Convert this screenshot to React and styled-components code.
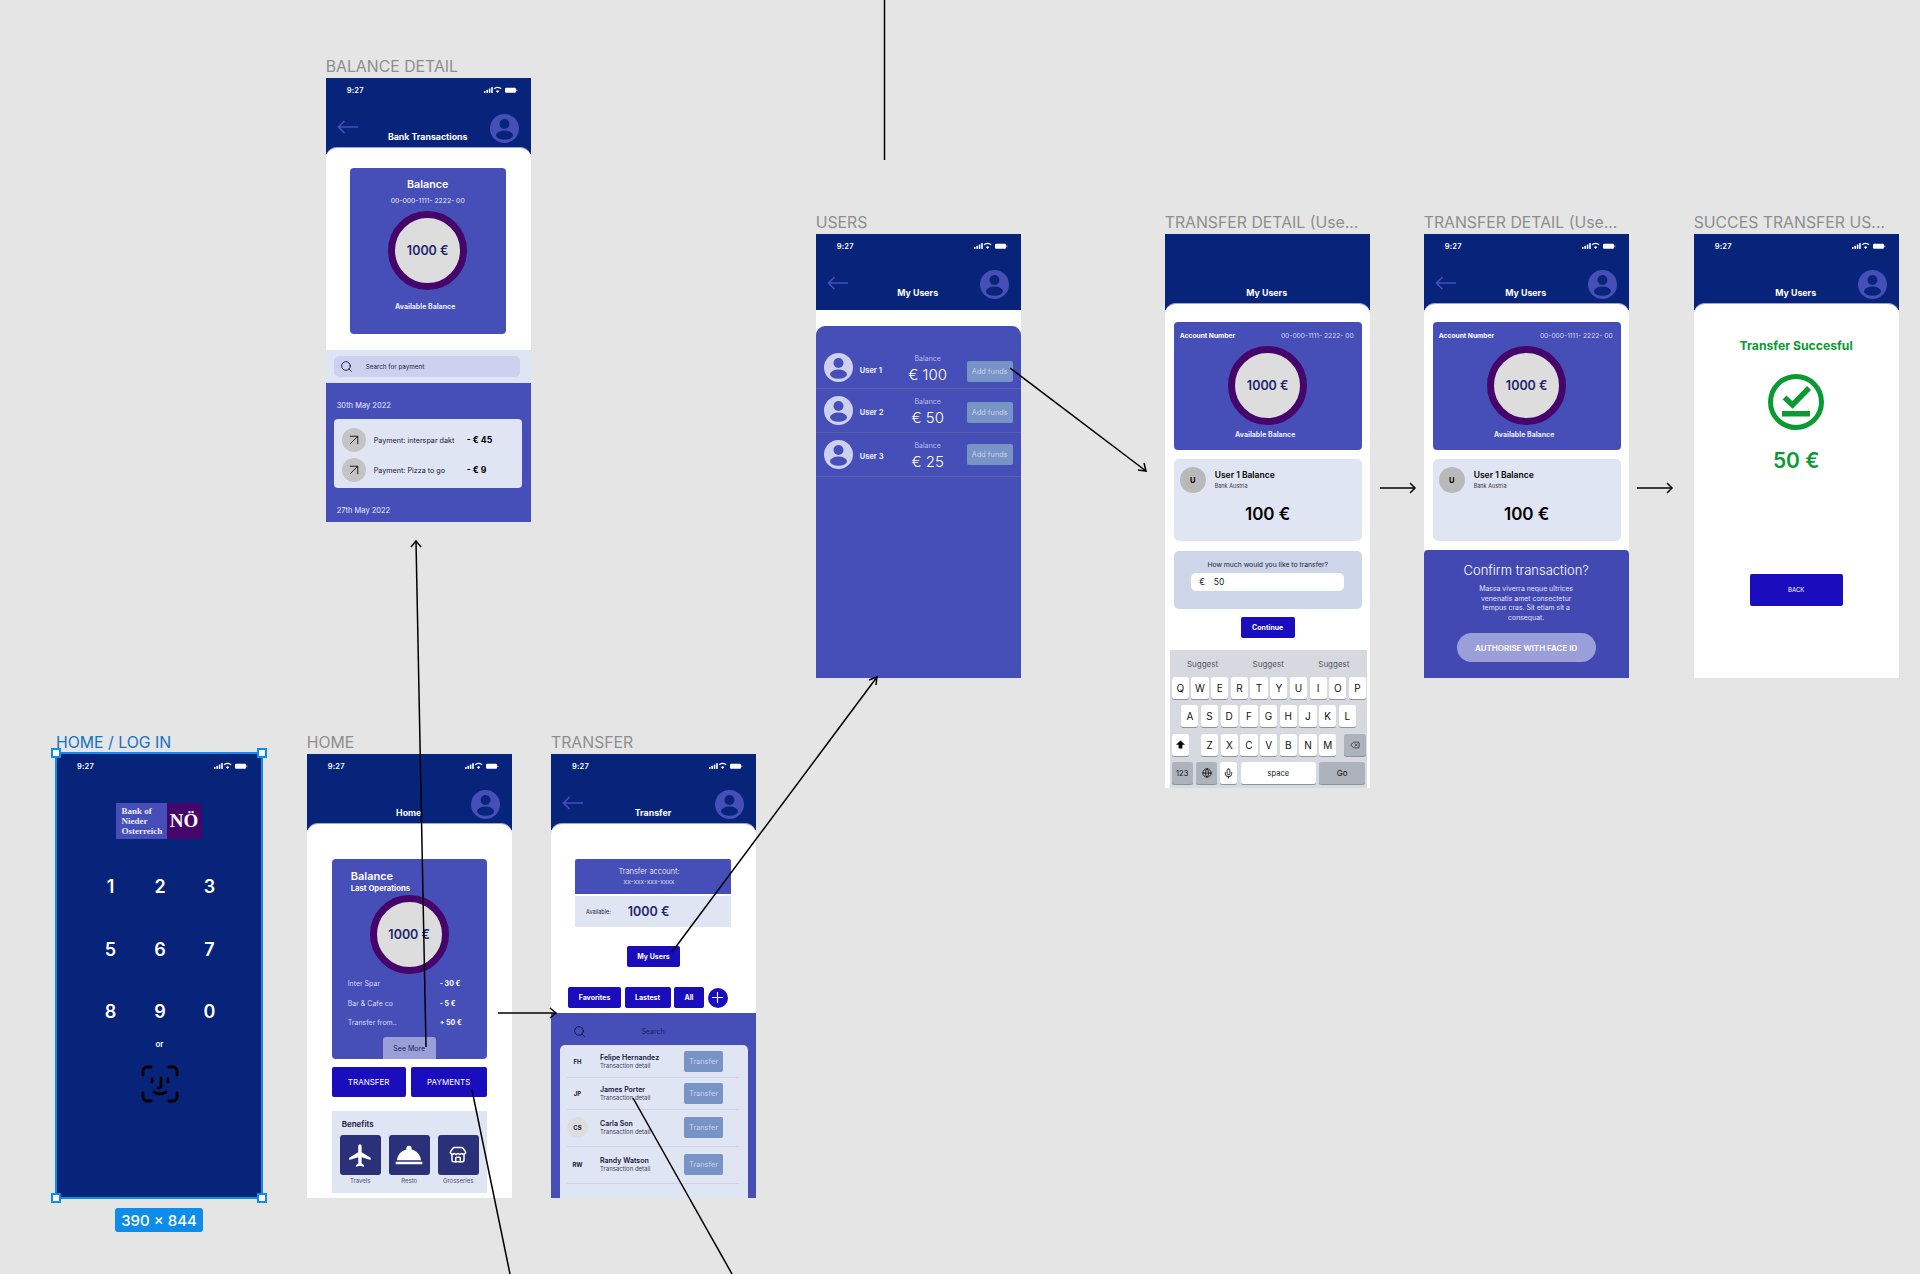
import React from 'react';
import styled, {createGlobalStyle} from 'styled-components';
import {ArrowUpRight, Delete, Globe, Mic, Plus, Search, Store} from 'lucide-react';
import {MdFlight, MdRoomService} from 'react-icons/md';

const NAVY = '#07247a';
const PURPLE = '#464eb8';
const RING = '#46056a';
const PALE = '#e0e5f3';
const BLUE = '#1a0dbe';
const MUTED = '#7893c6';
const SOFT = '#9a9fda';

const GlobalStyle = createGlobalStyle`
  html, body {
    margin: 0;
    padding: 0;
    background: #e5e5e5;
  }
  * {
    box-sizing: border-box;
  }
`;

const Canvas = styled.div`
  position: relative;
  width: 1920px;
  height: 1274px;
  overflow: hidden;
  background: #e5e5e5;
  font-family: Inter, 'Liberation Sans', sans-serif;
`;

// frames sit on a free canvas, so their place is the content
const Frame = styled.div`
  position: absolute;
  left: ${p => p.$x}px;
  top: ${p => p.$y}px;
  width: 205px;
  height: ${p => p.$h || 444}px;
  display: flex;
  flex-direction: column;
  overflow: hidden;
  background: ${p => p.$bg || '#fff'};
`;

const FrameLabel = styled.div`
  position: absolute;
  left: ${p => p.$x}px;
  top: ${p => p.$y - 21}px;
  width: 205px;
  height: 20px;
  font-size: 15.8px;
  line-height: 20px;
  font-weight: 400;
  white-space: nowrap;
  color: ${p => p.$blue ? '#1273c4' : '#8e8e8e'};
`;

const HeaderBar = styled.div`
  flex: none;
  height: 76px;
  background: ${NAVY};
  color: #fff;
`;

const StatusRow = styled.div`
  flex: none;
  height: 24px;
  padding: 0 12px 0 21px;
  display: flex;
  align-items: center;
  justify-content: space-between;
  font-size: 7.5px;
  font-weight: 600;
  letter-spacing: 0.2px;
  color: #fff;
`;

const NavRow = styled.div`
  display: grid;
  grid-template-columns: 1fr auto 1fr;
  padding: 0 12px 0 11px;
`;

const NavTitle = styled.div`
  margin-top: 30px;
  font-size: 8.8px;
  line-height: 10px;
  font-weight: 700;
  white-space: nowrap;
`;

const BackSlot = styled.div`
  margin-top: 18px;
  height: 14px;
  display: flex;
`;

const AvatarSlot = styled.div`
  margin-top: 12px;
  height: 29px;
  display: flex;
  justify-content: flex-end;
`;

const Sheet = styled.div`
  flex: ${p => p.$h ? 'none' : 1};
  height: ${p => p.$h ? `${p.$h}px` : 'auto'};
  min-height: 0;
  margin-top: -7px;
  padding: ${p => p.$pad || '0'};
  background: #fff;
  border-radius: 11px 11px 0 0;
  border-top: 1px solid #9aa5da;
  display: flex;
  flex-direction: column;
`;

const Ring = styled.div`
  flex: none;
  width: 79px;
  height: 79px;
  border-radius: 50%;
  border: 7px solid ${RING};
  background: #ddd;
  display: flex;
  align-items: center;
  justify-content: center;
  font-size: 12.5px;
  font-weight: 600;
  color: #20256f;
  white-space: nowrap;
`;

const PurpleCard = styled.div`
  flex: none;
  height: ${p => p.$h}px;
  background: ${PURPLE};
  border-radius: 4px;
  display: flex;
  flex-direction: column;
  color: #fff;
  align-items: ${p => p.$left ? 'stretch' : 'center'};
`;

const SolidButton = styled.div`
  flex: none;
  display: flex;
  align-items: center;
  justify-content: center;
  width: ${p => p.$w}px;
  height: ${p => p.$h}px;
  margin-top: ${p => p.$mt || 0}px;
  background: ${BLUE};
  border-radius: 2px;
  color: #fff;
  font-size: ${p => p.$size || 7}px;
  font-weight: ${p => p.$weight || 700};
  white-space: nowrap;
`;

const MutedButton = styled.div`
  flex: none;
  width: ${p => p.$w}px;
  height: 21px;
  margin-top: ${p => p.$mt || 0}px;
  display: flex;
  align-items: center;
  justify-content: center;
  background: ${MUTED};
  border-radius: 2px;
  font-size: ${p => p.$size || 7.3}px;
  color: #c9d4ec;
`;

/* login */
const SelectionBox = styled.div`
  position: absolute;
  left: 55px;
  top: 752px;
  width: 208px;
  height: 447px;
  border: 2px solid #0d8cea;
`;

const Handle = styled.span`
  position: absolute;
  width: 10px;
  height: 10px;
  background: #fff;
  border: 2px solid #0d8cea;
  ${p => p.$bottom ? 'bottom: -6px;' : 'top: -6px;'}
  ${p => p.$right ? 'right: -6px;' : 'left: -6px;'}
`;

const SizeTag = styled.div`
  position: absolute;
  left: 115px;
  top: 1208px;
  width: 88px;
  height: 24px;
  background: #0d8cea;
  border-radius: 3px;
  color: #fff;
  font-size: 15px;
  font-weight: 500;
  display: flex;
  align-items: center;
  justify-content: center;
`;

const LoginBody = styled.div`
  flex: 1;
  display: flex;
  flex-direction: column;
  align-items: center;
  color: #fff;
  background: ${NAVY};
`;

const Logo = styled.div`
  margin-top: 25px;
  display: flex;
  height: 36px;
  font-family: 'Liberation Serif', serif;
  font-weight: 700;
`;

const LogoWords = styled.div`
  width: 51px;
  padding: 3px 0 0 6px;
  background: ${PURPLE};
  font-size: 9px;
  line-height: 10px;
  color: #eceaf6;
`;

const LogoMark = styled.div`
  width: 35px;
  background: ${RING};
  font-size: 19px;
  display: flex;
  align-items: center;
  justify-content: center;
`;

const PinPad = styled.div`
  margin-top: 36.7px;
  margin-left: 3px;
  display: grid;
  grid-template-columns: repeat(3, 49.5px);
  grid-auto-rows: 62.5px;
`;

const PinKey = styled.div`
  display: flex;
  align-items: center;
  justify-content: center;
  height: 22px;
  font-size: 18px;
  font-weight: 600;
`;

const OrText = styled.div`
  margin-top: -24px;
  margin-left: 2px;
  font-size: 8px;
  line-height: 10px;
  font-weight: 600;
`;

const FaceSlot = styled.div`
  margin-top: 15.7px;
  margin-left: 2px;
  height: 38px;
`;

/* home */
const BalanceTitle = styled.div`
  padding: 11px 0 0 19px;
  font-size: 11px;
  line-height: 12px;
  font-weight: 600;
`;

const BalanceSub = styled.div`
  padding: 2px 0 0 19px;
  font-size: 7.7px;
  line-height: 10px;
  font-weight: 700;
`;

const RingRow = styled.div`
  display: flex;
  justify-content: center;
  margin-top: ${p => p.$mt}px;
`;

const OpRow = styled.div`
  display: grid;
  grid-template-columns: 92px auto;
  height: 19.5px;
  padding-left: 16px;
  align-items: center;
  font-size: 7px;
  color: #d8dcf5;
`;

const OpAmount = styled.span`
  font-weight: 700;
  color: #fff;
`;

const SeeMore = styled.div`
  align-self: center;
  margin-top: auto;
  width: 53px;
  height: 22px;
  background: ${SOFT};
  border-radius: 3px 3px 0 0;
  display: flex;
  align-items: center;
  justify-content: center;
  font-size: 7px;
  color: #1f2157;
`;

const ButtonRow = styled.div`
  display: flex;
  gap: 5px;
  margin-top: 8px;
`;

const BenefitsPanel = styled.div`
  margin-top: 14px;
  height: 82px;
  background: ${PALE};
  padding: 8px 8px 0;
  color: #14163d;
`;

const BenefitsTitle = styled.div`
  font-size: 8px;
  line-height: 10px;
  font-weight: 600;
  padding-left: 2px;
`;

const TileRow = styled.div`
  display: flex;
  gap: 8px;
  margin-top: 6px;
`;

const Tile = styled.div`
  width: 41px;
  color: #4c4f77;
  font-size: 6px;
  line-height: 7px;
  text-align: center;
`;

const TileBox = styled.div`
  height: 40px;
  margin-bottom: 2px;
  border-radius: 3px;
  background: #2b3179;
  color: #fff;
  display: flex;
  align-items: center;
  justify-content: center;
`;

/* transfer */
const AccountWrap = styled.div`
  padding: 35px 25px 0 24px;
`;

const AccountTop = styled.div`
  height: 35px;
  background: ${PURPLE};
  border-radius: 2px 2px 0 0;
  color: #fff;
  display: flex;
  flex-direction: column;
  align-items: center;
  justify-content: center;
  padding-right: 8px;
  gap: 2px;
  font-size: 7.5px;
  font-weight: 300;
`;

const AccountNumber = styled.div`
  font-size: 6.7px;
`;

const AccountBottom = styled.div`
  margin-top: 2px;
  height: 31px;
  background: ${PALE};
  display: flex;
  align-items: center;
  padding-left: 11px;
  gap: 17px;
  font-size: 5.5px;
  color: #1a1c44;
`;

const AccountAmount = styled.div`
  font-size: 12.5px;
  font-weight: 600;
  color: #20256f;
`;

const CenterRow = styled.div`
  display: flex;
  justify-content: center;
  margin-top: ${p => p.$mt || 0}px;
`;

const TabRow = styled.div`
  display: flex;
  align-items: center;
  gap: 3.5px;
  margin-top: 20px;
  padding-left: 17px;
`;

const PlusCircle = styled.div`
  width: 20px;
  height: 20px;
  border-radius: 50%;
  background: ${BLUE};
  color: #fff;
  display: flex;
  align-items: center;
  justify-content: center;
`;

const PurpleBlock = styled.div`
  flex: 1;
  margin-top: ${p => p.$mt || 0}px;
  background: ${PURPLE};
  color: #fff;
`;

const SearchStrip = styled.div`
  height: 32px;
  padding: 4px 0 0 22px;
  display: grid;
  grid-template-columns: 13px 1fr 36px;
  align-items: center;
  text-align: center;
  font-size: 7px;
  color: #1c1f63;
`;

const PeoplePanel = styled.div`
  margin: 0 8px 0 9px;
  height: 160px;
  background: ${PALE};
  border-radius: 5px 5px 0 0;
  padding: 0 9px 0 7px;
  color: #14163d;
`;

const PersonRow = styled.div`
  height: ${p => p.$h}px;
  border-bottom: 1px solid #cdd3ea;
  display: flex;
  align-items: center;
`;

const Initials = styled.div`
  flex: none;
  width: 21px;
  height: 21px;
  border-radius: 50%;
  background: ${p => p.$grey ? '#ddd' : 'transparent'};
  display: flex;
  align-items: center;
  justify-content: center;
  font-size: 6px;
  font-weight: 700;
`;

const PersonText = styled.div`
  flex: 1;
  padding-left: 12px;
`;

const PersonName = styled.div`
  font-size: 7px;
  line-height: 9px;
  font-weight: 600;
`;

const PersonDetail = styled.div`
  font-size: 6px;
  line-height: 8px;
  color: #3a3c5c;
`;

const PersonButton = styled(MutedButton)`
  margin-right: 16px;
`;

/* users */
const UsersPanel = styled.div`
  flex: 1;
  margin-top: 16px;
  padding-top: 21px;
  background: ${PURPLE};
  border-radius: 9px 9px 0 0;
  color: #fff;
`;

const UserRow = styled.div`
  height: ${p => p.$h}px;
  display: flex;
  align-items: center;
  padding: 0 8px;
  border-bottom: 1px solid #5b60a8;
`;

const UserName = styled.div`
  width: 46px;
  padding: 5px 0 0 7px;
  font-size: 7.5px;
  font-weight: 700;
  color: #e7e9fa;
`;

const UserBalance = styled.div`
  flex: 1;
  display: flex;
  flex-direction: column;
  align-items: center;
  padding: 2px 10px 0 0;
`;

const UserBalanceLabel = styled.div`
  margin-bottom: 3px;
  font-size: 7px;
  line-height: 9px;
  color: #b9bce8;
`;

const UserAmount = styled.div`
  font-size: 15px;
  line-height: 17px;
  font-weight: 300;
`;

/* transfer detail */
const DetailPad = styled.div`
  padding: 18px 8px 0 9px;
`;

const CardHead = styled.div`
  display: flex;
  justify-content: space-between;
  padding: 10px 8px 0 6px;
  font-size: 6.7px;
  line-height: 9px;
`;

const CardHeadStrong = styled.span`
  font-weight: 700;
`;

const CardHeadNumber = styled.span`
  color: #d5d8f3;
`;

const AvailableLabel = styled.div`
  text-align: center;
  padding-right: 5px;
  margin-top: ${p => p.$mt || 5}px;
  font-size: 7px;
  line-height: 9px;
  font-weight: 700;
  color: #e9ebfb;
`;

const PaleCard = styled.div`
  margin-top: 9px;
  height: 82px;
  background: ${PALE};
  border-radius: 5px;
  padding: 8px 6px 0;
  color: #000;
`;

const PaleCardTop = styled.div`
  display: flex;
  align-items: center;
  gap: 9px;
`;

const UserBadge = styled.div`
  width: 26px;
  height: 26px;
  border-radius: 50%;
  background: #b9b9b9;
  display: flex;
  align-items: center;
  justify-content: center;
  font-size: 7.5px;
  font-weight: 700;
`;

const PaleName = styled.div`
  font-size: 8.5px;
  line-height: 10px;
  font-weight: 600;
`;

const PaleBank = styled.div`
  margin-top: 2px;
  font-size: 5.5px;
  line-height: 8px;
  color: #333;
`;

const PaleAmount = styled.div`
  margin-top: 11px;
  text-align: center;
  font-size: 17px;
  line-height: 20px;
  font-weight: 600;
`;

const AmountPanel = styled.div`
  margin-top: 10px;
  height: 58px;
  background: #ccd6e8;
  border-radius: 5px;
  padding-top: 9px;
  display: flex;
  flex-direction: column;
  align-items: center;
`;

const AmountQuestion = styled.div`
  font-size: 6.8px;
  line-height: 9px;
  color: #20223f;
`;

const AmountInput = styled.div`
  margin-top: 4px;
  width: 153px;
  height: 18px;
  padding-left: 8px;
  background: #fff;
  border-radius: 5px;
  display: flex;
  align-items: center;
  gap: 9px;
  font-size: 8.5px;
  color: #222;
`;

const Keyboard = styled.div`
  margin: 12px 3px 0 5px;
  height: 138px;
  background: #d6d9df;
  padding: 0 2px;
`;

const SuggestRow = styled.div`
  display: grid;
  grid-template-columns: repeat(3, 1fr);
  height: 27px;
  margin: 0 -2px;
  align-items: center;
  text-align: center;
  font-size: 8px;
  color: #55585f;
`;

const KeyRow = styled.div`
  display: flex;
  gap: ${p => p.$gap || 2.4}px;
  height: 22px;
  margin-bottom: 6.4px;
  padding-left: ${p => p.$indent || 0}px;
`;

const Key = styled.div`
  flex: ${p => p.$w ? `0 0 ${p.$w}px` : '0 0 17.3px'};
  margin-left: ${p => p.$ml || 0}px;
  display: flex;
  align-items: center;
  justify-content: center;
  background: ${p => p.$dark ? '#adb3bc' : '#fff'};
  border-radius: 2.5px;
  box-shadow: 0 1px 0 #8f939b;
  font-size: ${p => p.$size || 10}px;
  color: #111;
`;

const ConfirmPanel = styled.div`
  flex: 1;
  margin-top: 9px;
  background: #4349b2;
  border-radius: 4px 4px 0 0;
  color: #fff;
  display: flex;
  flex-direction: column;
  align-items: center;
  padding-top: 12px;
`;

const ConfirmTitle = styled.div`
  font-size: 13px;
  line-height: 16px;
  font-weight: 300;
`;

const ConfirmBody = styled.div`
  margin-top: 6px;
  text-align: center;
  font-size: 6.9px;
  line-height: 9.6px;
  white-space: nowrap;
  color: #e0e2f6;
`;

const FaceButton = styled.div`
  margin-top: 11px;
  width: 139px;
  height: 29px;
  border-radius: 15px;
  background: ${SOFT};
  display: flex;
  align-items: center;
  justify-content: center;
  font-size: 8px;
  font-weight: 600;
`;

/* success */
const SuccessBody = styled.div`
  display: flex;
  flex-direction: column;
  align-items: center;
  color: #0a9a33;
`;

const SuccessTitle = styled.div`
  margin-top: 35px;
  font-size: 12.2px;
  line-height: 14px;
  font-weight: 700;
`;

const SuccessIcon = styled.div`
  margin-top: 21px;
  height: 56px;
`;

const SuccessAmount = styled.div`
  margin-top: 18.7px;
  font-size: 21px;
  line-height: 24px;
  font-weight: 600;
`;

/* balance detail */
const DetailTitle = styled.div`
  margin-top: 10.6px;
  text-align: center;
  font-size: 10.7px;
  line-height: 12px;
  font-weight: 600;
`;

const DetailNumber = styled.div`
  margin-top: 5px;
  font-size: 6.8px;
  line-height: 9px;
  color: #e4e6f8;
`;

const SearchBand = styled.div`
  flex: none;
  height: 33px;
  background: ${PALE};
  padding: 6px 11px 0 8px;
`;

const SearchPill = styled.div`
  height: 21px;
  background: #cdd0ee;
  border-radius: 5px;
  display: flex;
  align-items: center;
  gap: 13px;
  padding-left: 6px;
  font-size: 6.3px;
  color: #20223f;
`;

const DateLabel = styled.div`
  padding-left: 11px;
  font-size: 7.5px;
  line-height: 10px;
  color: #e9ebfb;
  margin-top: ${p => p.$mt}px;
`;

const PaymentsPanel = styled.div`
  margin: 8px 9px 0 8px;
  height: 69px;
  background: ${PALE};
  border-radius: 4px;
  padding-top: 9px;
  color: #14163d;
`;

const PaymentRow = styled.div`
  display: flex;
  align-items: center;
  height: 24px;
  margin-bottom: 6px;
  padding-left: 8px;
  font-size: 7.2px;
`;

const PaymentIcon = styled.div`
  flex: none;
  width: 24px;
  height: 24px;
  border-radius: 50%;
  background: #c4c4c4;
  color: #111;
  display: flex;
  align-items: center;
  justify-content: center;
`;

const PaymentText = styled.div`
  width: 101px;
  padding-left: 8px;
  white-space: nowrap;
`;

const PaymentAmount = styled.div`
  font-size: 8.7px;
  font-weight: 700;
  color: #000;
`;

const ConnectorLayer = styled.svg`
  position: absolute;
  left: 0;
  top: 0;
`;

const Connector = ({points, head}) => (
    <g fill="none" stroke="#000" strokeWidth="1.5">
        <polyline points={points}/>
        {head && <polyline points={head}/>}
    </g>
);

const StatusIcons = () => (
    <svg width="35" height="8" viewBox="0 0 35 8">
        <g fill="#fff">
            <rect x="0" y="5" width="1.6" height="2" rx="0.4"/>
            <rect x="2.4" y="3.8" width="1.6" height="3.2" rx="0.4"/>
            <rect x="4.8" y="2.4" width="1.6" height="4.6" rx="0.4"/>
            <rect x="7.2" y="1" width="1.6" height="6" rx="0.4"/>
            <path d="M13.6 7 L12 5.2 A2.2 2.2 0 0 1 15.2 5.2 Z"/>
            <path d="M17.6 2.2 L16.6 3.2 A4.6 4.6 0 0 0 10.6 3.2 L9.6 2.2 A6 6 0 0 1 17.6 2.2 Z"/>
            <rect x="21" y="1.8" width="11" height="5" rx="1.2"/>
            <rect x="32.5" y="3.4" width="0.8" height="1.8" rx="0.4"/>
        </g>
    </svg>
);

const BackArrow = () => (
    <svg width="21" height="14" viewBox="0 0 21 14" fill="none" stroke={PURPLE} strokeWidth="1.7">
        <path d="M21 7 H1.5 M7.5 1 L1.5 7 L7.5 13"/>
    </svg>
);

const AvatarIcon = ({bg = PURPLE, fg = NAVY}) => (
    <svg width="29" height="29" viewBox="0 0 29 29">
        <circle cx="14.5" cy="14.5" r="14.5" fill={bg}/>
        <circle cx="14.5" cy="10" r="5" fill={fg}/>
        <ellipse cx="14.5" cy="21.2" rx="8.5" ry="4.6" fill={fg}/>
    </svg>
);

const FaceIdIcon = () => (
    <svg width="38" height="38" viewBox="0 0 38 38" fill="none" stroke="#000" strokeWidth="2.8" strokeLinecap="round">
        <path d="M2 10 V6 A4 4 0 0 1 6 2 H10"/>
        <path d="M28 2 H32 A4 4 0 0 1 36 6 V10"/>
        <path d="M36 28 V32 A4 4 0 0 1 32 36 H28"/>
        <path d="M10 36 H6 A4 4 0 0 1 2 32 V28"/>
        <path d="M11 14 V17 M27 14 V17"/>
        <path d="M20 13 V21 Q20 23 17.5 23"/>
        <path d="M13 27 Q19 31 25 27"/>
    </svg>
);

const ShiftIcon = () => (
    <svg width="9" height="9" viewBox="0 0 9 9" fill="#000">
        <path d="M4.5 0.5 L9 4.8 H6.4 V8.5 H2.6 V4.8 H0 Z"/>
    </svg>
);

const SuccessMark = () => (
    <svg width="56" height="56" viewBox="0 0 56 56" fill="none" stroke="#0a9a33">
        <circle cx="28" cy="28" r="25.5" strokeWidth="5"/>
        <path d="M16.5 23.5 L24.5 31 L41 14" strokeWidth="5.5"/>
        <rect x="14" y="37" width="28" height="5.5" fill="#0a9a33" stroke="none"/>
    </svg>
);

const AppHeader = ({title, back, avatar = true, bare}) => (
    <HeaderBar>
        <StatusRow>
            {!bare && <span>{'9:27'}</span>}
            {!bare && <StatusIcons/>}
        </StatusRow>
        <NavRow>
            <BackSlot>{back && <BackArrow/>}</BackSlot>
            <NavTitle>{title}</NavTitle>
            <AvatarSlot>{avatar && <AvatarIcon/>}</AvatarSlot>
        </NavRow>
    </HeaderBar>
);

const LoginFrame = () => (
    <Frame $x={56} $y={754} $bg={NAVY}>
        <StatusRow>
            <span>{'9:27'}</span>
            <StatusIcons/>
        </StatusRow>
        <LoginBody>
            <Logo>
                <LogoWords>{'Bank of'}<br/>{'Nieder'}<br/>{'Osterreich'}</LogoWords>
                <LogoMark>{'NÖ'}</LogoMark>
            </Logo>
            <PinPad>
                {['1', '2', '3', '5', '6', '7', '8', '9', '0'].map(n => <PinKey key={n}>{n}</PinKey>)}
            </PinPad>
            <OrText>{'or'}</OrText>
            <FaceSlot><FaceIdIcon/></FaceSlot>
        </LoginBody>
    </Frame>
);

const HomeFrame = () => (
    <Frame $x={306.7} $y={754}>
        <AppHeader title={'Home'}/>
        <Sheet $pad={'35px 25px 0'}>
            <PurpleCard $h={200} $left>
                <BalanceTitle>{'Balance'}</BalanceTitle>
                <BalanceSub>{'Last Operations'}</BalanceSub>
                <RingRow $mt={1}><Ring>{'1000 €'}</Ring></RingRow>
                <div>
                    <OpRow>{'Inter Spar'}<OpAmount>{'- 30 €'}</OpAmount></OpRow>
                    <OpRow>{'Bar & Cafe co'}<OpAmount>{'- 5 €'}</OpAmount></OpRow>
                    <OpRow>{'Transfer from..'}<OpAmount>{'+ 50 €'}</OpAmount></OpRow>
                </div>
                <SeeMore>{'See More'}</SeeMore>
            </PurpleCard>
            <ButtonRow>
                <SolidButton $w={74} $h={30} $size={8} $weight={400}>{'TRANSFER'}</SolidButton>
                <SolidButton $w={76} $h={30} $size={8} $weight={400}>{'PAYMENTS'}</SolidButton>
            </ButtonRow>
            <BenefitsPanel>
                <BenefitsTitle>{'Benefits'}</BenefitsTitle>
                <TileRow>
                    <Tile><TileBox><MdFlight size={27}/></TileBox>{'Travels'}</Tile>
                    <Tile><TileBox><MdRoomService size={32}/></TileBox>{'Resto'}</Tile>
                    <Tile><TileBox><Store size={18}/></TileBox>{'Grosseries'}</Tile>
                </TileRow>
            </BenefitsPanel>
        </Sheet>
    </Frame>
);

const PEOPLE = [
    {id: 'FH', name: 'Felipe Hernandez', h: 33},
    {id: 'JP', name: 'James Porter', h: 32},
    {id: 'CS', name: 'Carla Son', h: 36.5, grey: true},
    {id: 'RW', name: 'Randy Watson', h: 37},
];

const TransferFrame = () => (
    <Frame $x={551} $y={754}>
        <AppHeader title={'Transfer'} back/>
        <Sheet>
            <AccountWrap>
                <AccountTop>
                    {'Transfer account:'}
                    <AccountNumber>{'xx-xxx-xxx-xxxx'}</AccountNumber>
                </AccountTop>
                <AccountBottom>
                    {'Available:'}
                    <AccountAmount>{'1000 €'}</AccountAmount>
                </AccountBottom>
            </AccountWrap>
            <CenterRow $mt={19}><SolidButton $w={53} $h={21}>{'My Users'}</SolidButton></CenterRow>
            <TabRow>
                <SolidButton $w={53} $h={21}>{'Favorites'}</SolidButton>
                <SolidButton $w={46} $h={21}>{'Lastest'}</SolidButton>
                <SolidButton $w={30} $h={21}>{'All'}</SolidButton>
                <PlusCircle><Plus size={17} strokeWidth={1.6}/></PlusCircle>
            </TabRow>
            <PurpleBlock $mt={5}>
                <SearchStrip>
                    <Search size={13} color="#10123d" strokeWidth={1.7}/>
                    {'Search'}
                </SearchStrip>
                <PeoplePanel>
                    {PEOPLE.map(p => (
                        <PersonRow key={p.id} $h={p.h}>
                            <Initials $grey={p.grey}>{p.id}</Initials>
                            <PersonText>
                                <PersonName>{p.name}</PersonName>
                                <PersonDetail>{'Transaction detail'}</PersonDetail>
                            </PersonText>
                            <PersonButton $w={39}>{'Transfer'}</PersonButton>
                        </PersonRow>
                    ))}
                </PeoplePanel>
            </PurpleBlock>
        </Sheet>
    </Frame>
);

const USERS = [
    {name: 'User 1', amount: '€ 100', h: 42, shift: 8},
    {name: 'User 2', amount: '€ 50', h: 43.7, shift: 4},
    {name: 'User 3', amount: '€ 25', h: 44, shift: 0},
];

const UsersFrame = () => (
    <Frame $x={815.7} $y={234}>
        <AppHeader title={'My Users'} back/>
        <UsersPanel>
            {USERS.map(u => (
                <UserRow key={u.name} $h={u.h}>
                    <AvatarIcon bg="#cdd0ee" fg={PURPLE}/>
                    <UserName>{u.name}</UserName>
                    <UserBalance>
                        <UserBalanceLabel>{'Balance'}</UserBalanceLabel>
                        <UserAmount>{u.amount}</UserAmount>
                    </UserBalance>
                    <MutedButton $w={46} $mt={u.shift}>{'Add funds'}</MutedButton>
                </UserRow>
            ))}
        </UsersPanel>
    </Frame>
);

const AccountCard = () => (
    <PurpleCard $h={128} $left>
        <CardHead>
            <CardHeadStrong>{'Account Number'}</CardHeadStrong>
            <CardHeadNumber>{'00-000-1111- 2222- 00'}</CardHeadNumber>
        </CardHead>
        <RingRow $mt={5}><Ring>{'1000 €'}</Ring></RingRow>
        <AvailableLabel>{'Available Balance'}</AvailableLabel>
    </PurpleCard>
);

const UserBalanceCard = () => (
    <PaleCard>
        <PaleCardTop>
            <UserBadge>{'U'}</UserBadge>
            <div>
                <PaleName>{'User 1 Balance'}</PaleName>
                <PaleBank>{'Bank Austria'}</PaleBank>
            </div>
        </PaleCardTop>
        <PaleAmount>{'100 €'}</PaleAmount>
    </PaleCard>
);

const KEY_ROWS = ['QWERTYUIOP', 'ASDFGHJKL', 'ZXCVBNM'];

const TransferDetailFrame = () => (
    <Frame $x={1164.7} $y={234} $h={554}>
        <AppHeader title={'My Users'} bare avatar={false}/>
        <Sheet>
            <DetailPad>
                <AccountCard/>
                <UserBalanceCard/>
                <AmountPanel>
                    <AmountQuestion>{'How much would you like to transfer?'}</AmountQuestion>
                    <AmountInput><span>{'€'}</span><span>{'50'}</span></AmountInput>
                </AmountPanel>
                <CenterRow $mt={8}><SolidButton $w={54} $h={21}>{'Continue'}</SolidButton></CenterRow>
            </DetailPad>
            <Keyboard>
                <SuggestRow><span>{'Suggest'}</span><span>{'Suggest'}</span><span>{'Suggest'}</span></SuggestRow>
                <KeyRow>{KEY_ROWS[0].split('').map(k => <Key key={k}>{k}</Key>)}</KeyRow>
                <KeyRow $indent={9.5}>{KEY_ROWS[1].split('').map(k => <Key key={k}>{k}</Key>)}</KeyRow>
                <KeyRow>
                    <Key><ShiftIcon/></Key>
                    <Key $ml={9.6}>{'Z'}</Key>
                    {KEY_ROWS[2].split('').slice(1).map(k => <Key key={k}>{k}</Key>)}
                    <Key $dark $w={22} $ml={5.3}><Delete size={10} strokeWidth={1.5}/></Key>
                </KeyRow>
                <KeyRow $gap={3.4}>
                    <Key $dark $w={21} $size={7.5}>{'123'}</Key>
                    <Key $dark $w={21}><Globe size={10}/></Key>
                    <Key $w={17}><Mic size={11}/></Key>
                    <Key $w={75} $size={7.5}>{'space'}</Key>
                    <Key $dark $w={46} $size={8}>{'Go'}</Key>
                </KeyRow>
            </Keyboard>
        </Sheet>
    </Frame>
);

const ConfirmFrame = () => (
    <Frame $x={1423.7} $y={234}>
        <AppHeader title={'My Users'} back/>
        <Sheet>
            <DetailPad>
                <AccountCard/>
                <UserBalanceCard/>
            </DetailPad>
            <ConfirmPanel>
                <ConfirmTitle>{'Confirm transaction?'}</ConfirmTitle>
                <ConfirmBody>
                    {'Massa viverra neque ultrices'}<br/>
                    {'venenatis amet consectetur'}<br/>
                    {'tempus cras. Sit etiam sit a'}<br/>
                    {'consequat.'}
                </ConfirmBody>
                <FaceButton>{'AUTHORISE WITH FACE ID'}</FaceButton>
            </ConfirmPanel>
        </Sheet>
    </Frame>
);

const SuccessFrame = () => (
    <Frame $x={1693.7} $y={234}>
        <AppHeader title={'My Users'}/>
        <Sheet>
            <SuccessBody>
                <SuccessTitle>{'Transfer Succesful'}</SuccessTitle>
                <SuccessIcon><SuccessMark/></SuccessIcon>
                <SuccessAmount>{'50 €'}</SuccessAmount>
                <SolidButton $w={93} $h={32} $size={6} $weight={400} $mt={101}>{'BACK'}</SolidButton>
            </SuccessBody>
        </Sheet>
    </Frame>
);

const BalanceFrame = () => (
    <Frame $x={325.7} $y={78}>
        <AppHeader title={'Bank Transactions'} back/>
        <Sheet $pad={'20px 25px 0 24px'} $h={203}>
            <PurpleCard $h={166}>
                <DetailTitle>{'Balance'}</DetailTitle>
                <DetailNumber>{'00-000-1111- 2222- 00'}</DetailNumber>
                <RingRow $mt={6}><Ring>{'1000 €'}</Ring></RingRow>
                <AvailableLabel $mt={12}>{'Available Balance'}</AvailableLabel>
            </PurpleCard>
        </Sheet>
        <SearchBand>
            <SearchPill>
                <Search size={13} color="#10123d" strokeWidth={1.7}/>
                {'Search for payment'}
            </SearchPill>
        </SearchBand>
        <PurpleBlock>
            <DateLabel $mt={18}>{'30th May 2022'}</DateLabel>
            <PaymentsPanel>
                <PaymentRow>
                    <PaymentIcon><ArrowUpRight size={18} strokeWidth={1.2}/></PaymentIcon>
                    <PaymentText>{'Payment: interspar dakt'}</PaymentText>
                    <PaymentAmount>{'- € 45'}</PaymentAmount>
                </PaymentRow>
                <PaymentRow>
                    <PaymentIcon><ArrowUpRight size={18} strokeWidth={1.2}/></PaymentIcon>
                    <PaymentText>{'Payment: Pizza to go'}</PaymentText>
                    <PaymentAmount>{'- € 9'}</PaymentAmount>
                </PaymentRow>
            </PaymentsPanel>
            <DateLabel $mt={18}>{'27th May 2022'}</DateLabel>
        </PurpleBlock>
    </Frame>
);

const App = () => (
    <>
        <GlobalStyle/>
        <Canvas>
            <FrameLabel $x={325.7} $y={78}>{'BALANCE DETAIL'}</FrameLabel>
            <FrameLabel $x={56} $y={754} $blue>{'HOME / LOG IN'}</FrameLabel>
            <FrameLabel $x={306.7} $y={754}>{'HOME'}</FrameLabel>
            <FrameLabel $x={551} $y={754}>{'TRANSFER'}</FrameLabel>
            <FrameLabel $x={815.7} $y={234}>{'USERS'}</FrameLabel>
            <FrameLabel $x={1164.7} $y={234}>{'TRANSFER DETAIL (Use...'}</FrameLabel>
            <FrameLabel $x={1423.7} $y={234}>{'TRANSFER DETAIL  (Use...'}</FrameLabel>
            <FrameLabel $x={1693.7} $y={234}>{'SUCCES TRANSFER US...'}</FrameLabel>

            <BalanceFrame/>
            <LoginFrame/>
            <HomeFrame/>
            <TransferFrame/>
            <UsersFrame/>
            <TransferDetailFrame/>
            <ConfirmFrame/>
            <SuccessFrame/>

            <SelectionBox>
                <Handle/>
                <Handle $right/>
                <Handle $bottom/>
                <Handle $bottom $right/>
            </SelectionBox>
            <SizeTag>{'390 × 844'}</SizeTag>

            <ConnectorLayer width="1920" height="1274" viewBox="0 0 1920 1274">
                <Connector points="884.5,0 884.5,160"/>
                <Connector points="426,1047 416,541" head="411,547 416,541 421,547"/>
                <Connector points="498,1013 556,1013" head="550,1008 556,1013 550,1018"/>
                <Connector points="472,1090 510,1274"/>
                <Connector points="633,1098 732,1274"/>
                <Connector points="672,952 877,677" head="869,680 877,677 876,685"/>
                <Connector points="1010,368 1146,471" head="1138,470 1146,471 1144,463"/>
                <Connector points="1380,488 1415,488" head="1410,483 1415,488 1410,493"/>
                <Connector points="1637,488 1672,488" head="1667,483 1672,488 1667,493"/>
            </ConnectorLayer>
        </Canvas>
    </>
);

export default App;
